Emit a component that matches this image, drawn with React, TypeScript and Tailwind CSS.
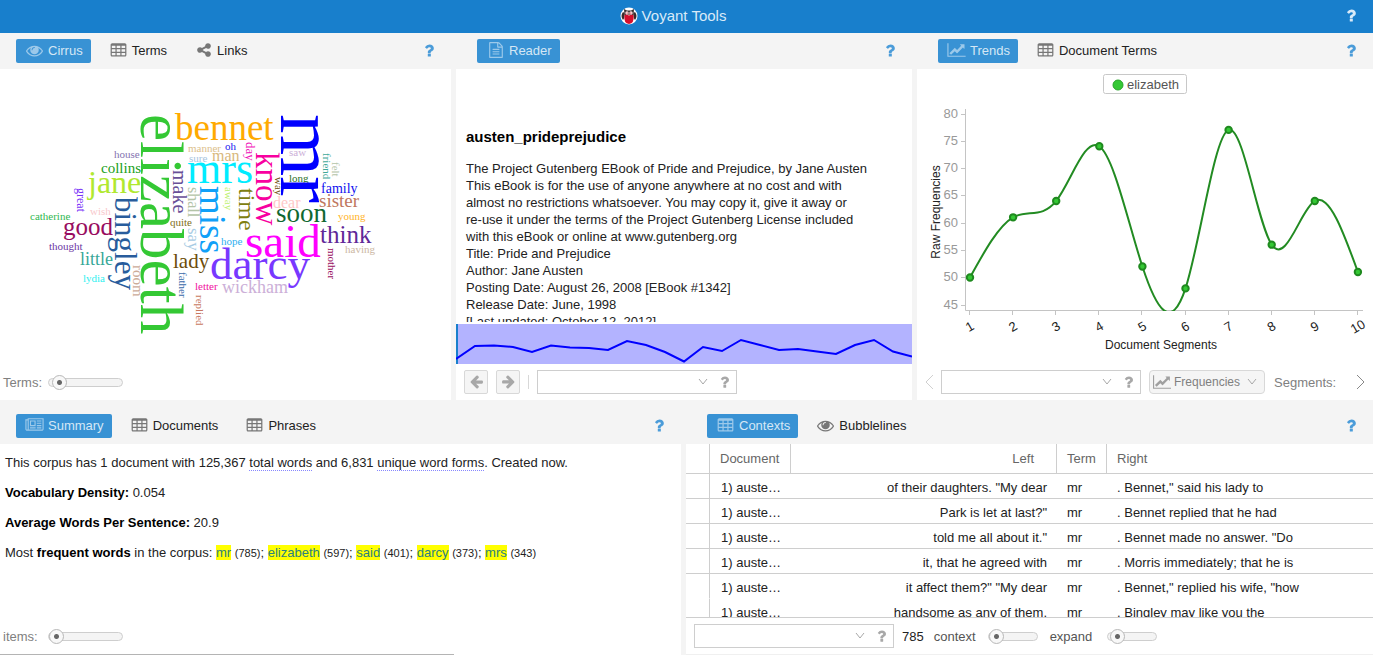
import { useId, type ReactNode } from "react";

type Glyph = { box: string; d: string };

const cell = "v-192q0-14-9-23t-23-9h-320q-14 0-23 9t-9 23v192q0 14 9 23t23 9h320q14 0 23-9t9-23z";
const GLYPHS: Record<string, Glyph> = {
  eye: {
    box: "0 0 1792 1792",
    d: "M1664 960q-152-236-381-353 61 104 61 225 0 185-131.5 316.5t-316.5 131.5-316.5-131.5-131.5-316.5q0-121 61-225-229 117-381 353 133 205 333.5 326.5t434.5 121.5 434.5-121.5 333.5-326.5zm-720-384q0-20-14-34t-34-14q-125 0-214.5 89.5t-89.5 214.5q0 20 14 34t34 14 34-14 14-34q0-86 61-147t147-61q20 0 34-14t14-34zm848 384q0 34-20 69-140 230-376.5 368.5t-499.5 138.5-499.5-139-376.5-368q-20-35-20-69t20-69q140-229 376.5-368t499.5-139 499.5 139 376.5 368q20 35 20 69z",
  },
  table: {
    box: "0 0 1792 1792",
    d: `${[576, 1088, 1600].flatMap((x) => [608, 992, 1376].map((y) => `M${x} ${y}${cell}`)).join("")}M1728 288v1088q0 66-47 113t-113 47h-1344q-66 0-113-47t-47-113v-1088q0-66 47-113t113-47h1344q66 0 113 47t47 113z`,
  },
  share: {
    box: "0 0 1792 1792",
    d: "M1344 1024q133 0 226.5 93.5t93.5 226.5-93.5 226.5-226.5 93.5-226.5-93.5-93.5-226.5q0-12 2-34l-360-180q-92 86-218 86-133 0-226.5-93.5t-93.5-226.5 93.5-226.5 226.5-93.5q126 0 218 86l360-180q-2-22-2-34 0-133 93.5-226.5t226.5-93.5 226.5 93.5 93.5 226.5-93.5 226.5-226.5 93.5q-126 0-218-86l-360 180q2 22 2 34t-2 34l360 180q92-86 218-86z",
  },
  file: {
    box: "0 0 1792 1792",
    d: "M1596 380q28 28 48 76t20 88v1152q0 40-28 68t-68 28h-1344q-40 0-68-28t-28-68v-1600q0-40 28-68t68-28h896q40 0 88 20t76 48zm-444-244v376h376q-10-29-22-41l-313-313q-12-12-41-22zm384 1528v-1024h-416q-40 0-68-28t-28-68v-416h-768v1536h1280zm-1024-864q0-14 9-23t23-9h704q14 0 23 9t9 23v64q0 14-9 23t-23 9h-704q-14 0-23-9t-9-23v-64zm736 224q14 0 23 9t9 23v64q0 14-9 23t-23 9h-704q-14 0-23-9t-9-23v-64q0-14 9-23t23-9h704zm0 256q14 0 23 9t9 23v64q0 14-9 23t-23 9h-704q-14 0-23-9t-9-23v-64q0-14 9-23t23-9h704z",
  },
  chart: {
    box: "0 0 2048 1792",
    d: "M2048 1536v128h-2048v-1536h128v1408h1920zm-128-1248v435q0 21-19.5 29.5t-35.5-7.5l-121-121-633 633q-10 10-23 10t-23-10l-233-233-416 416-192-192 585-585q10-10 23-10t23 10l233 233 464-464-121-121q-16-16-7.5-35.5t29.5-19.5h435q14 0 23 9t9 23z",
  },
  news: {
    box: "0 0 2048 1792",
    d: "M1024 512h-384v384h384v-384zm128 640v128h-640v-128h640zm0-768v640h-640v-640h640zm640 768v128h-512v-128h512zm0-256v128h-512v-128h512zm0-256v128h-512v-128h512zm0-256v128h-512v-128h512zm-1536 960v-960h-128v960q0 26 19 45t45 19 45-19 19-45zm1664 0v-1088h-1536v1088q0 33-11 64h1483q26 0 45-19t19-45zm128-1216v1216q0 80-56 136t-136 56h-1664q-80 0-136-56t-56-136v-1088h256v-128h1792z",
  },
  question: {
    box: "384 0 1024 1792",
    d: "M1088 1256v240q0 16-12 28t-28 12h-240q-16 0-28-12t-12-28v-240q0-16 12-28t28-12h240q16 0 28 12t12 28zm316-600q0 54-15.5 101t-35 76.5-55 59.5-57.5 43.5-61 35.5q-41 23-68.5 65t-27.5 67q0 17-12 32.5t-28 15.5h-240q-15 0-25.5-18.5t-10.5-37.5v-45q0-83 65-156.5t143-108.5q59-27 84-56t25-76q0-42-46.5-74t-107.5-32q-65 0-108 29-35 25-107 115-13 16-31 16-12 0-25-8l-164-125q-13-10-15.5-25t5.5-28q160-266 464-266 80 0 161 31t146 83 106 127.5 41 158.5z",
  },
  arrow: {
    box: "0 0 1792 1792",
    d: "M1664 896v128q0 53-32.5 90.5t-84.5 37.5h-704l293 294q38 36 38 90t-38 90l-75 76q-37 37-90 37-52 0-91-37l-651-652q-37-37-37-90 0-52 37-91l651-650q38-38 91-38 52 0 90 38l75 74q38 38 38 91t-38 91l-293 293h704q52 0 84.5 37.5t32.5 90.5z",
  },
};

function Icon({ name, className }: { name: string; className: string }) {
  const g = GLYPHS[name];
  return (
    <svg viewBox={g.box} className={`shrink-0 fill-current ${className}`} aria-hidden="true">
      <path fillRule="nonzero" d={g.d} />
    </svg>
  );
}

function Chevron({ className, box = "0 0 10 8", d = "M1 1l4 5 4-5" }: { className: string; box?: string; d?: string }) {
  return (
    <svg viewBox={box} className={`shrink-0 fill-none stroke-current ${className}`} aria-hidden="true">
      <path d={d} />
    </svg>
  );
}

type TabInfo = { label: string; icon: string; active?: boolean };

function TabBar({ tabs, className }: { tabs: TabInfo[]; className: string }) {
  return (
    <div className={`flex items-center gap-[9px] pr-[17px] ${className}`}>
      {tabs.map((t) => (
        <button
          key={t.label}
          type="button"
          className={`flex h-6 items-center gap-1 rounded-xs pb-[2px] pl-[9px] ${t.active ? "bg-[#3892d4] pr-2 text-[#d5e7f5]" : "pr-[9px] text-[#222]"}`}
        >
          <span className={`flex w-[19px] justify-center ${t.active ? "text-[#9cc9ea]" : "text-[#777]"}`}>
            <Icon name={t.icon} className={t.icon === "chart" || t.icon === "news" ? "h-4 w-[19px]" : t.icon === "eye" || t.icon === "table" ? "size-[17px]" : "size-4"} />
          </span>
          {t.label}
        </button>
      ))}
      <button type="button" aria-label="Help" className="ml-auto pb-[2px] text-[#4b9cd9]">
        <Icon name="question" className="h-[17px] w-[10px]" />
      </button>
    </div>
  );
}

function ComboBox({ label }: { label: string }) {
  return (
    <div className="flex h-6 w-[200px] shrink-0 items-center border border-[#cecece] bg-white text-[#a8a8a8]">
      <input aria-label={label} className="h-full min-w-0 flex-1 px-2 text-[#333] outline-none" />
      <button type="button" aria-label="Show options" className="px-3">
        <Chevron className="h-2 w-[10px]" />
      </button>
      <button type="button" aria-label="Search help" className="mr-[7px]">
        <Icon name="question" className="h-4 w-[9px]" />
      </button>
    </div>
  );
}

function Slider({ label, value, className, labelClass }: { label: string; value: number; className: string; labelClass: string }) {
  const id = useId();
  return (
    <>
      <label htmlFor={id} className={labelClass}>{label}</label>
      <input
        id={id}
        type="range"
        defaultValue={value}
        className={`h-[15px] shrink-0 appearance-none bg-transparent [&::-webkit-slider-runnable-track]:h-[9px] [&::-webkit-slider-runnable-track]:rounded-full [&::-webkit-slider-runnable-track]:border [&::-webkit-slider-runnable-track]:border-[#cecece] [&::-webkit-slider-runnable-track]:bg-[#f4f4f4] [&::-webkit-slider-thumb]:-mt-1 [&::-webkit-slider-thumb]:size-[15px] [&::-webkit-slider-thumb]:appearance-none [&::-webkit-slider-thumb]:rounded-full [&::-webkit-slider-thumb]:border [&::-webkit-slider-thumb]:border-[#b8b8b8] [&::-webkit-slider-thumb]:bg-[radial-gradient(circle,#666_2px,#f8f8f8_3px)] ${className}`}
      />
    </>
  );
}

// word, colour, size, x, baseline
const ACROSS: [string, string, number, number, number][] = [
  ["bennet", "#ffaa00", 37, 175, 140],
  ["manner", "#dcc08c", 11, 188, 152],
  ["oh", "#2020f0", 11, 225, 150],
  ["sure", "#a8c4e0", 11, 189, 162],
  ["man", "#d8b87c", 16, 212, 161],
  ["house", "#8474b0", 11, 114, 158],
  ["collins", "#20a020", 15, 101, 173],
  ["jane", "#b0e830", 32, 88, 193],
  ["mrs", "#00ecff", 44, 187, 183],
  ["catherine", "#30b850", 11, 30, 220],
  ["wish", "#f8c8cc", 11, 90, 215],
  ["good", "#980c60", 25, 63, 235],
  ["thought", "#6c38a4", 11, 49, 250],
  ["little", "#38a898", 18, 80, 265],
  ["lydia", "#30f0f0", 11, 83, 282],
  ["quite", "#807018", 11, 170, 226],
  ["lady", "#6c4c08", 21, 173, 268],
  ["letter", "#f010a0", 11, 195, 290],
  ["darcy", "#7838ff", 45, 210, 279],
  ["said", "#ff00ff", 47, 245, 257],
  ["wickham", "#ccb0d8", 18, 222, 293],
  ["hope", "#30b0f0", 11, 221, 245],
  ["soon", "#106830", 27, 276, 222],
  ["think", "#602898", 25, 320, 243],
  ["sister", "#c07860", 19, 319, 207],
  ["family", "#1010f0", 14, 321, 193],
  ["young", "#ffb428", 11, 338, 220],
  ["having", "#ccb8a4", 11, 345, 253],
  ["saw", "#ccb0d8", 11, 289, 156],
  ["long", "#287028", 11, 289, 182],
  ["dear", "#ffc8c8", 16, 273, 208],
];
// word, colour, size, baseline x, top y
const DOWN: [string, string, number, number, number][] = [
  ["elizabeth", "#34c834", 61, 141, 114],
  ["mr", "#0000ff", 80, 281, 114],
  ["bingley", "#285c9c", 31, 115, 197],
  ["great", "#7830f8", 12, 77, 188],
  ["make", "#685098", 20, 173, 170],
  ["shall", "#b4c4a8", 16, 188, 187],
  ["miss", "#10a0f8", 37, 200, 186],
  ["say", "#a8cce4", 17, 188, 228],
  ["room", "#ccac98", 15, 133, 265],
  ["father", "#3868a8", 11, 179, 272],
  ["replied", "#c87860", 11, 196, 295],
  ["day", "#f010b8", 13, 246, 142],
  ["know", "#f800a0", 33, 256, 152],
  ["way", "#705010", 11, 275, 177],
  ["away", "#c0f070", 11, 225, 187],
  ["time", "#808010", 24, 239, 188],
  ["friend", "#40a898", 11, 323, 153],
  ["felt", "#b4c4a8", 11, 332, 162],
  ["mother", "#980c60", 11, 328, 248],
];

function WordCloud() {
  return (
    <svg viewBox="0 69 451 300" className="h-[300px] w-full font-['Liberation_Serif',serif]" role="img" aria-label="Word cloud">
      {ACROSS.map(([w, c, s, x, y]) => (
        <text key={w} x={x} y={y} fontSize={s} fill={c}>{w}</text>
      ))}
      {DOWN.map(([w, c, s, x, y]) => (
        <text key={w} transform={`translate(${x} ${y}) rotate(90)`} fontSize={s} fill={c}>{w}</text>
      ))}
    </svg>
  );
}

const FREQ = [50, 61, 64, 74, 52, 48, 77, 56, 64, 51];
const STEP = 43.1;
const px = (i: number) => 53 + i * STEP;
const py = (v: number) => 44.5 + (80 - v) * 5.465;

// Natural cubic spline through equally spaced samples, as Bézier segments.
function splinePath(values: number[]) {
  const ys = values.map(py);
  const n = ys.length - 1;
  const c: number[] = [];
  const r: number[] = [];
  for (let i = 0; i <= n; i++) {
    const b = i === 0 || i === n ? 2 : 4;
    const rhs = 3 * (ys[Math.min(i + 1, n)] - ys[Math.max(i - 1, 0)]);
    const m = i === 0 ? b : b - c[i - 1];
    c[i] = 1 / m;
    r[i] = (rhs - (i === 0 ? 0 : r[i - 1])) / m;
  }
  const k: number[] = [];
  for (let i = n; i >= 0; i--) k[i] = r[i] - (i === n ? 0 : c[i] * k[i + 1]);
  let d = `M${px(0)} ${ys[0]}`;
  for (let i = 0; i < n; i++) {
    d += `C${px(i) + STEP / 3} ${ys[i] + k[i] / 3} ${px(i + 1) - STEP / 3} ${ys[i + 1] - k[i + 1] / 3} ${px(i + 1)} ${ys[i + 1]}`;
  }
  return d;
}

function TrendChart() {
  return (
    <svg viewBox="0 0 456 295" className="h-[295px] w-full" role="img" aria-label="Raw frequencies of elizabeth by document segment">
      <clipPath id="plot"><rect x="40" y="30" width="416" height="212" /></clipPath>
      <rect x="186.500" y="5.500" width="83" height="19" rx="2" fill="#fff" stroke="#c8c8c8" />
      <circle cx="201" cy="16" r="5" fill="#34c834" stroke="#28a428" />
      <text x="210" y="20" fontSize="13" fill="#555">elizabeth</text>
      <path d="M48.500 40V241.500H446" fill="none" stroke="#c4c4c4" />
      {[80, 75, 70, 65, 60, 55, 50, 45].map((v) => (
        <g key={v}>
          <path d={`M44 ${Math.round(py(v)) + 0.5}h4`} stroke="#c4c4c4" />
          <text x="41" y={Math.round(py(v)) + 4} textAnchor="end" fontSize="13" fill="#999">{v}</text>
        </g>
      ))}
      {FREQ.map((_, i) => (
        <g key={i}>
          <path d={`M${Math.round(px(i)) - 0.5} 242v4`} stroke="#c4c4c4" />
          <text transform={`translate(${px(i)} 258) rotate(-30)`} textAnchor="middle" y="4" fontSize="13" fill="#222">{i + 1}</text>
        </g>
      ))}
      <text x="244" y="280" textAnchor="middle" fontSize="12" fill="#222">Document Segments</text>
      <text transform="translate(23 143) rotate(-90)" textAnchor="middle" fontSize="12" fill="#222">Raw Frequencies</text>
      <g clipPath="url(#plot)">
        <path d={splinePath(FREQ)} fill="none" stroke="#228b22" strokeWidth="2" />
        {FREQ.map((v, i) => (
          <circle key={i} cx={px(i)} cy={py(v)} r="3.200" fill="#34c834" stroke="#1f8a1f" strokeWidth="2" />
        ))}
      </g>
    </svg>
  );
}

function Owl() {
  return (
    <svg viewBox="0 0 18 18" className="size-[18px]" aria-hidden="true">
      <circle cx="9" cy="9" r="8.500" fill="#fff" />
      <path d="M3 5Q0 9 3 13Q5 11 4.500 6zM15 5Q18 9 15 13Q13 11 13.500 6z" fill="#3b2b2b" />
      <path d="M4 2l3 1.500h4L14 2l-.5 6h-9z" fill="#3a2c2c" />
      <path d="M4.500 8Q6.500 7 9 8.500Q11.500 7 13.500 8Q14.500 16.500 9 17Q3.500 16.500 4.500 8z" fill="#d40f2c" />
      <circle cx="7" cy="6" r="1.700" fill="#fbe4e4" />
      <circle cx="11" cy="6" r="1.700" fill="#fbe4e4" />
      <circle cx="7.200" cy="6" r=".6" fill="#d40f2c" />
      <circle cx="10.800" cy="6" r=".6" fill="#d40f2c" />
      <path d="M8.300 7h1.400L9 9z" fill="#e8b0a0" />
    </svg>
  );
}

const READER_LINES = [
  "The Project Gutenberg EBook of Pride and Prejudice, by Jane Austen",
  "This eBook is for the use of anyone anywhere at no cost and with",
  "almost no restrictions whatsoever. You may copy it, give it away or",
  "re-use it under the terms of the Project Gutenberg License included",
  "with this eBook or online at www.gutenberg.org",
  "Title: Pride and Prejudice",
  "Author: Jane Austen",
  "Posting Date: August 26, 2008 [EBook #1342]",
  "Release Date: June, 1998",
  "[Last updated: October 12, 2012]",
];

const FREQUENT: [string, number][] = [["mr", 785], ["elizabeth", 597], ["said", 401], ["darcy", 373], ["mrs", 343]];

const CONTEXTS: [string, string][] = [
  ["of their daughters. \"My dear", ". Bennet,\" said his lady to"],
  ["Park is let at last?\"", ". Bennet replied that he had"],
  ["told me all about it.\"", ". Bennet made no answer. \"Do"],
  ["it, that he agreed with", ". Morris immediately; that he is"],
  ["it affect them?\" \"My dear", ". Bennet,\" replied his wife, \"how"],
  ["handsome as any of them.", ". Bingley may like you the"],
];

function Panel({ tabs, bar, children }: { tabs: TabInfo[]; bar: string; children: ReactNode }) {
  return (
    <section className="flex min-h-0 min-w-0 flex-col">
      <TabBar tabs={tabs} className={bar} />
      <div className="flex min-h-0 flex-1 flex-col overflow-hidden bg-white">{children}</div>
    </section>
  );
}

export default function App() {
  return (
    <div className="flex h-screen flex-col overflow-hidden bg-[#f4f4f4] font-['Liberation_Sans',Arial,sans-serif] text-[13px] leading-[17px] text-[#222]">
      <header className="flex h-[33px] shrink-0 items-center bg-[#187fcc] pr-[17px] pb-[2px] pl-4 text-[#d8eaf8]">
        <div className="flex-1" />
        <h1 className="mr-[26px] flex items-center gap-1 text-[15px]"><Owl />Voyant Tools</h1>
        <div className="flex flex-1 justify-end">
          <button type="button" aria-label="Help"><Icon name="question" className="h-[17px] w-[10px]" /></button>
        </div>
      </header>

      <div className="grid h-[367px] shrink-0 grid-cols-[451fr_456fr_456fr] gap-[5px]">
        <Panel bar="h-9 shrink-0 pl-4" tabs={[{ label: "Cirrus", icon: "eye", active: true }, { label: "Terms", icon: "table" }, { label: "Links", icon: "share" }]}>
          <WordCloud />
          <div className="flex flex-1 items-center pb-1 pl-[3px]">
            <Slider label="Terms:" value={6} className="w-[75px]" labelClass="w-[45px] text-[#808080]" />
          </div>
        </Panel>

        <Panel bar="h-9 shrink-0 pl-[21px]" tabs={[{ label: "Reader", icon: "file", active: true }]}>
          <div className="h-[253px] shrink-0 overflow-hidden px-[10px] pt-[59px]">
            <h2 className="text-[15px] leading-[18px] font-bold text-black">austen_prideprejudice</h2>
            <div className="mt-[14px] whitespace-nowrap">
              {READER_LINES.map((l) => <p key={l}>{l}</p>)}
            </div>
          </div>
          <svg viewBox="0 0 456 40" preserveAspectRatio="none" className="mt-[2px] h-10 w-full shrink-0 bg-[#b3b3ff]" role="img" aria-label="Reader position">
            <rect width="2" height="40" fill="#187fcc" />
            <path d="M0 35L19 22 38 21.500 57 23 76 28 95 21.500 114 23.500 133 24 152 26 171 17 190 21 209 28 228 37.500 247 23 266 27 285 16 304 21 323 26 342 25 361 27.500 380 30 399 21 418 16 437 27.500 456 32.500" fill="none" stroke="#0000ff" strokeWidth="2" />
          </svg>
          <div className="flex flex-1 items-center px-2">
            <button type="button" aria-label="Previous" className="flex size-6 items-center justify-center rounded-xs border border-[#d8d8d8] bg-[#f5f5f5] pb-px text-[#a8a8a8]"><Icon name="arrow" className="size-[15px]" /></button>
            <button type="button" aria-label="Next" className="ml-2 flex size-6 items-center justify-center rounded-xs border border-[#d8d8d8] bg-[#f5f5f5] text-[#a8a8a8]"><Icon name="arrow" className="size-[15px] rotate-180" /></button>
            <div className="mr-2 ml-2 h-[14px] w-px bg-[#d8d8d8]" />
            <ComboBox label="Search the text" />
          </div>
        </Panel>

        <Panel bar="h-9 shrink-0 pl-[21px]" tabs={[{ label: "Trends", icon: "chart", active: true }, { label: "Document Terms", icon: "table" }]}>
          <TrendChart />
          <div className="flex flex-1 items-center px-2 text-[#808080]">
            <button type="button" aria-label="Scroll left" className="w-4 text-[#d0d0d0]"><Chevron className="h-4 w-[9px]" box="0 0 9 16" d="M8 1L1 8l7 7" /></button>
            <ComboBox label="Search trends" />
            <button type="button" className="ml-2 flex h-6 shrink-0 items-center gap-[3px] rounded-sm border border-[#d8d8d8] bg-[#f5f5f5] px-[3px] text-[12px]">
              <Icon name="chart" className="h-4 w-[18px] text-[#a0a0a0]" />
              Frequencies
              <Chevron className="mx-1 h-2 w-[10px] text-[#a8a8a8]" />
            </button>
            <span className="ml-[9px]">Segments:</span>
            <button type="button" aria-label="Scroll right" className="ml-auto text-[#888]"><Chevron className="h-4 w-[9px]" box="0 0 9 16" d="M1 1l7 7-7 7" /></button>
          </div>
        </Panel>
      </div>

      <div className="grid min-h-0 flex-1 grid-cols-[681fr_687fr] grid-rows-1 gap-[5px]">
        <Panel bar="h-11 shrink-0 pt-2 pl-4" tabs={[{ label: "Summary", icon: "news", active: true }, { label: "Documents", icon: "table" }, { label: "Phrases", icon: "table" }]}>
          <div className="flex flex-1 flex-col gap-[13px] px-[5px] pt-[10px] whitespace-nowrap">
            <p>This corpus has 1 document with 125,367 <span className="border-b border-dotted border-[#8888ff]">total words</span> and 6,831 <span className="border-b border-dotted border-[#8888ff]">unique word forms</span>. Created now.</p>
            <p><b className="text-black">Vocabulary Density:</b> 0.054</p>
            <p><b className="text-black">Average Words Per Sentence:</b> 20.9</p>
            <p>Most <b className="text-black">frequent words</b> in the corpus:{" "}
              {FREQUENT.map(([w, n], i) => (
                <span key={w}><a href={`#${w}`} className="bg-[#ffff00] text-[#2a8080]">{w}</a> <span className="text-[11px]">({n})</span>{i < FREQUENT.length - 1 ? "; " : ""}</span>
              ))}
            </p>
          </div>
          <div className="flex h-9 shrink-0 items-center pl-[3px]">
            <Slider label="items:" value={0} className="w-[75px]" labelClass="w-[45px] text-[#808080]" />
          </div>
          <div className="h-px w-2/3 shrink-0 bg-[#b4b4b4]" />
        </Panel>

        <Panel bar="h-11 shrink-0 pt-2 pl-[21px]" tabs={[{ label: "Contexts", icon: "table", active: true }, { label: "Bubblelines", icon: "eye" }]}>
          <div className="min-h-0 flex-1 overflow-hidden border-b border-[#cecece]">
            <table className="w-full table-fixed border-separate border-spacing-0 whitespace-nowrap">
              <colgroup>
                <col className="w-6" /><col className="w-[81px]" /><col className="w-[266px]" /><col className="w-[50px]" /><col />
              </colgroup>
              <thead className="text-[#666]">
                <tr className="h-[30px] [&>th]:border-b [&>th]:border-[#cecece] [&>th]:font-normal">
                  <th className="border-r" aria-label="Expand" />
                  <th className="border-r px-[10px] text-left">Document</th>
                  <th className="border-r pr-[22px] text-right">Left</th>
                  <th className="border-r px-[10px] text-left">Term</th>
                  <th className="px-[10px] text-left">Right</th>
                </tr>
              </thead>
              <tbody>
                {CONTEXTS.map(([left, right], i) => (
                  <tr key={left} className={`h-[25px] [&>td]:border-b [&>td]:pt-[3px] ${i < 4 ? "[&>td]:border-b-[#cecece]" : "[&>td]:border-b-transparent"}`}>
                    <td className="border-r border-r-[#cecece]" />
                    <td className="pl-[11px]">1) auste…</td>
                    <td className="pr-[10px] text-right">{left}</td>
                    <td className="px-[10px]">mr</td>
                    <td className="px-[10px]">{right}</td>
                  </tr>
                ))}
              </tbody>
            </table>
          </div>
          <div className="flex h-9 shrink-0 items-center pl-2">
            <ComboBox label="Search contexts" />
            <span className="ml-2">785</span>
            <Slider label="context" value={0} className="ml-3 w-[50px]" labelClass="ml-[10px] text-[#555]" />
            <Slider label="expand" value={6} className="ml-[15px] w-[50px]" labelClass="ml-3 text-[#555]" />
          </div>
          <div className="h-px shrink-0 bg-[#f0f0f0]" />
        </Panel>
      </div>
    </div>
  );
}
